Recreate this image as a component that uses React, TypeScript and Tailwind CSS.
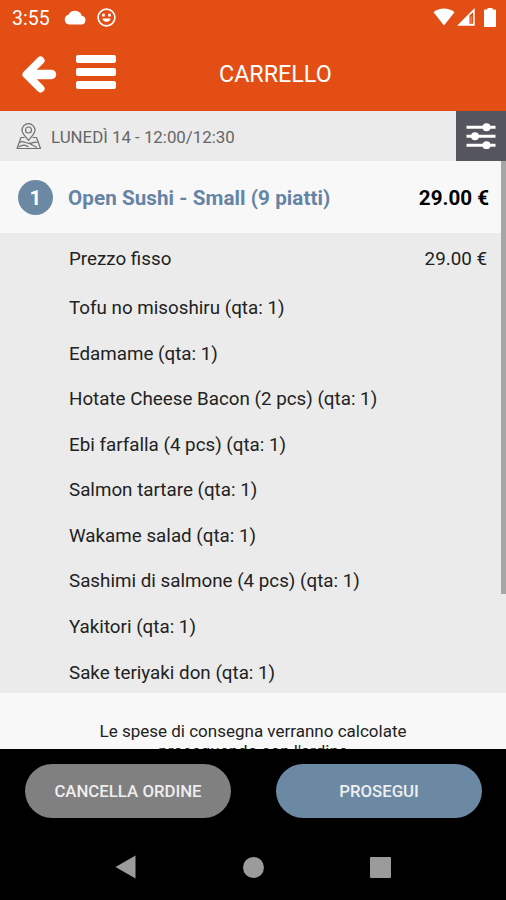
const items = [
  "Tofu no misoshiru (qta: 1)",
  "Edamame (qta: 1)",
  "Hotate Cheese Bacon (2 pcs) (qta: 1)",
  "Ebi farfalla (4 pcs) (qta: 1)",
  "Salmon tartare (qta: 1)",
  "Wakame salad (qta: 1)",
  "Sashimi di salmone (4 pcs) (qta: 1)",
  "Yakitori (qta: 1)",
  "Sake teriyaki don (qta: 1)",
];

function StatusBar() {
  return (
    <div className="flex h-9 items-center justify-between pl-3 pr-[10px]">
      <div className="flex items-center">
        <span className="w-[52px] pt-[2px] text-[19.5px] leading-[34px]">3:55</span>
        <svg className="-mt-[2px] h-4 w-[22px]" viewBox="0 0 22 16" fill="currentColor">
          <path d="M5.3 15.6a5 5 0 0 1-.9-9.8 7.3 7.3 0 0 1 13.4.9 4.5 4.5 0 0 1-.3 8.9z" />
        </svg>
        <svg
          className="-mt-[2px] ml-[11px] h-[19px] w-[19px]"
          viewBox="0 0 19 19"
          fill="none"
          stroke="currentColor"
          strokeWidth="1.6"
        >
          <circle cx="9.5" cy="9.5" r="8.4" />
          <path d="M5.4 10.6h8.2a4.2 4.2 0 0 1-8.2 0z" fill="currentColor" stroke="none" />
          <path d="M5.2 5.8h2.6v2.6H5.2zM11.2 5.8h2.6v2.6h-2.6z" fill="currentColor" stroke="none" />
        </svg>
      </div>
      <div className="-mt-[2px] flex items-center">
        <svg className="h-[18px] w-[22px]" viewBox="0 0 22 18" fill="currentColor">
          <path d="M11 17.5.5 4.2C6.7-.6 15.3-.6 21.5 4.2z" />
        </svg>
        <svg className="ml-[2px] h-[18px] w-[18px]" viewBox="0 0 18 18" fill="currentColor">
          <path
            fillRule="evenodd"
            d="M0 17.7 17.7 0v17.7zM12.4 7.5v8.3h3.7V4.2z"
          />
          <path d="M13.4 8.3h1.3v6.6h-1.3z" opacity=".35" />
        </svg>
        <svg className="ml-[9px] h-[19px] w-3" viewBox="0 0 12 19" fill="currentColor">
          <path d="M3.5 0h5v1.6H11a1 1 0 0 1 1 1V18a1 1 0 0 1-1 1H1a1 1 0 0 1-1-1V2.6a1 1 0 0 1 1-1h2.5z" />
        </svg>
      </div>
    </div>
  );
}

function Header() {
  return (
    <header className="h-[111px] bg-[#e24e14] text-white">
      <StatusBar />
      <div className="grid h-[75px] grid-cols-[219px_1fr]">
        <div className="flex items-start pl-[21px] pt-[18px]">
          <button aria-label="Indietro">
            <svg
              className="mt-[2px] h-[37px] w-[36px]"
              viewBox="0 0 36 37"
              fill="none"
              stroke="currentColor"
              strokeLinecap="round"
              strokeLinejoin="round"
            >
              <path d="M19.5 4.5 5.5 18.5l14 14" strokeWidth="8" />
              <path d="M7 18.5h23.5" strokeWidth="9.5" />
            </svg>
          </button>
          <button aria-label="Menu" className="ml-[19px] mt-[1px] flex flex-col gap-[5px]">
            <span className="h-2 w-10 rounded-[2px] bg-white" />
            <span className="h-2 w-10 rounded-[2px] bg-white" />
            <span className="h-2 w-10 rounded-[2px] bg-white" />
          </button>
        </div>
        <h1 className="pt-[21px] text-[23.3px] leading-[34px]">CARRELLO</h1>
      </div>
    </header>
  );
}

function DeliveryBar() {
  return (
    <div className="flex h-[50px] items-center bg-[#ebebeb]">
      <svg
        className="ml-4 h-7 w-[26px]"
        viewBox="0 0 26 28"
        fill="none"
        stroke="#707070"
        strokeWidth="1.2"
        strokeLinejoin="round"
      >
        <path d="M12.5 18.5C9 14 6 11.3 6 8.2a6.5 6.5 0 0 1 13 0c0 3.100-3 5.800-6.500 10.300z" />
        <circle cx="12.5" cy="8" r="3" />
        <path d="M8.500 15.500H5L1 26.500h23.500L20.500 15.500h-4" />
        <path d="M4 20.500c3-2.500 5 .8 9 .8s5-2 8.500-1M2.500 25c4-2.500 7-2.500 10 0M13 21.300l8 4.200" />
      </svg>
      <span className="ml-[9px] flex-1 pt-1 text-[16.85px] text-[#666]">
        LUNEDÌ 14 - 12:00/12:30
      </span>
      <button aria-label="Filtri" className="flex h-full w-[50px] justify-center bg-[#55555f] pt-3">
        <svg
          className="h-[26px] w-[30px]"
          viewBox="0 0 30 26"
          fill="#fff"
          stroke="#fff"
          strokeWidth="3"
        >
          <path d="M.5 4.200h29M.5 13.200h29M.5 22.200h29" />
          <g stroke="none">
            <circle cx="20.500" cy="4.200" r="4" />
            <circle cx="9" cy="13.200" r="4" />
            <circle cx="20.500" cy="22.200" r="4" />
          </g>
        </svg>
      </button>
    </div>
  );
}

export default function App() {
  return (
    <div className="flex h-[900px] w-[506px] flex-col overflow-hidden bg-black font-['Roboto',sans-serif]">
      <Header />
      <DeliveryBar />

      <main className="relative h-[588px] overflow-hidden bg-[#f8f8f8]">
        {/* Menu row */}
        <div className="flex h-[72px] items-center pl-[18px] pr-[17px] pt-[2px] text-[20.6px] font-bold">
          <span className="-mt-[2px] flex h-[35px] w-[35px] items-center justify-center rounded-full bg-[#6c89a3] pt-[2px] text-white">
            1
          </span>
          <span className="ml-[15px] flex-1 tracking-[0.08px] text-[#6584a5]">
            Open Sushi - Small (9 piatti)
          </span>
          <span className="text-black">29.00 €</span>
        </div>

        {/* Dishes */}
        <ul className="h-[460px] overflow-hidden bg-[#ebebeb] pl-[69px] pr-[19px] pt-[0.5px] text-[18.8px] text-[#222]">
          <li className="flex h-[52px] items-center justify-between">
            <span>Prezzo fisso</span>
            <span>29.00 €</span>
          </li>
          {items.map((item) => (
            <li key={item} className="flex h-[45.56px] items-center">
              {item}
            </li>
          ))}
        </ul>

        <p className="px-[90px] pt-[28px] text-center text-[17px] leading-[20px] text-[#222]">
          Le spese di consegna verranno calcolate proseguendo con l'ordine
        </p>

        {/* Scrollbar */}
        <div className="absolute right-0 top-0 h-[433px] w-[5px] bg-[#a6a6a6]" />
      </main>

      <div className="flex justify-between pl-[25px] pr-[24px] pt-[15px] text-[16.8px] font-medium text-[#eee]">
        <button className="h-[54px] w-[206px] rounded-full bg-[#808080] pt-[2px]">
          CANCELLA ORDINE
        </button>
        <button className="h-[54px] w-[206px] rounded-full bg-[#6c89a3] pt-[2px]">PROSEGUI</button>
      </div>

      {/* Android navigation */}
      <nav className="flex items-center pl-[115px] pt-[37px] text-[#9b9b9b]">
        <svg className="h-6 w-[21px]" viewBox="0 0 21 24" fill="currentColor">
          <path d="M.5 12 20.5.5v23z" />
        </svg>
        <span className="ml-[107px] h-[21px] w-[21px] rounded-full bg-current" />
        <span className="ml-[106px] h-[21px] w-[21px] rounded-[1px] bg-current" />
      </nav>
    </div>
  );
}
